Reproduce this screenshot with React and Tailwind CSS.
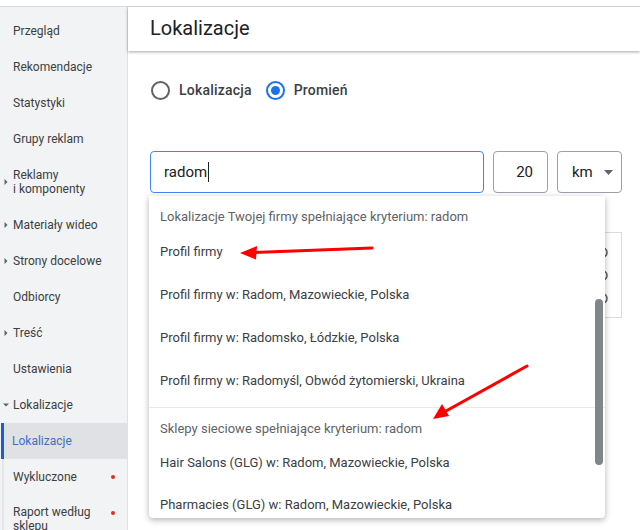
import React from "react"

const navItems = [
  { label: "Przegląd" },
  { label: "Rekomendacje" },
  { label: "Statystyki" },
  { label: "Grupy reklam" },
  { label: ["Reklamy", "i komponenty"], arrow: "right", tall: true },
  { label: "Materiały wideo", arrow: "right" },
  { label: "Strony docelowe", arrow: "right" },
  { label: "Odbiorcy" },
  { label: "Treść", arrow: "right" },
  { label: "Ustawienia" },
  { label: "Lokalizacje", arrow: "down" },
]

const subItems = [
  { label: "Lokalizacje", active: true },
  { label: "Wykluczone", dot: true },
  { label: ["Raport według", "sklepu"], dot: true, tall: true },
]

function Caret({ dir }) {
  if (dir === "down") {
    return (
      <svg width="6" height="6" viewBox="0 0 6 6" className="absolute left-[3px] top-1/2 -translate-y-1/2">
        <path d="M0 1.5 L6 1.5 L3 4.5 Z" fill="#5f6368" />
      </svg>
    )
  }
  return (
    <svg width="6" height="6" viewBox="0 0 6 6" className="absolute left-[3px] top-1/2 -translate-y-1/2">
      <path d="M1.5 0 L4.5 3 L1.5 6 Z" fill="#5f6368" />
    </svg>
  )
}

function Sidebar() {
  return (
    <div className="w-[128px] shrink-0 bg-[#f1f3f4] border-r border-[#e0e0e0] pt-[6px] text-[12px] text-[#3c4043]">
      {navItems.map((it, i) => (
        <div key={i} className={`relative flex items-center pl-[13px] ${it.tall ? "h-[50px]" : "h-[36px]"}`}>
          {it.arrow && <Caret dir={it.arrow} />}
          {Array.isArray(it.label) ? (
            <div className="leading-[14px]">
              <div>{it.label[0]}</div>
              <div>{it.label[1]}</div>
            </div>
          ) : (
            <span>{it.label}</span>
          )}
        </div>
      ))}
      <div className="ml-[2px] border-l-[2px] border-[#e3e5e8]">
        {subItems.map((it, i) => (
          <div
            key={i}
            className={`relative flex justify-between pr-[12px] ${it.tall ? "h-[40px] items-start pt-[10px]" : "h-[36px] items-center"} ${it.active ? "bg-[#dfe1e5] -ml-[3px] pl-[8px] border-l-[3px] border-[#1a5fd0] text-[#3f6fc6]" : "pl-[9px]"}`}
          >
            {Array.isArray(it.label) ? (
              <div className="leading-[14px]">
                <div>{it.label[0]}</div>
                <div>{it.label[1]}</div>
              </div>
            ) : (
              <span>{it.label}</span>
            )}
            {it.dot && <span className={`w-[4px] h-[4px] rounded-full bg-[#d93025] ${it.tall ? "mt-[6px]" : ""}`} />}
          </div>
        ))}
      </div>
    </div>
  )
}

function Radio({ checked, label }) {
  return (
    <div className="flex items-center gap-[9px]">
      {checked ? (
        <span className="w-[19px] h-[19px] rounded-full border-[2px] border-[#1a73e8] flex items-center justify-center">
          <span className="w-[9px] h-[9px] rounded-full bg-[#1a73e8]" />
        </span>
      ) : (
        <span className="w-[19px] h-[19px] rounded-full border-[2px] border-[#5f6368]" />
      )}
      <span className="text-[14px] font-medium text-[#3c4043] tracking-[0.2px]">{label}</span>
    </div>
  )
}

function Arrows() {
  return (
    <svg className="absolute inset-0 pointer-events-none" width="640" height="530" viewBox="0 0 640 530">
      <line x1="372" y1="248" x2="254" y2="252.5" stroke="#ff0000" strokeWidth="3" strokeLinecap="round" />
      <path d="M240 253 L257 246 L256 259.5 Z" fill="#ff0000" />
      <line x1="527" y1="366" x2="446" y2="411" stroke="#ff0000" strokeWidth="3" strokeLinecap="round" />
      <path d="M433 419 L442 404 L449 416 Z" fill="#ff0000" />
    </svg>
  )
}

function Dropdown() {
  const bizItems = [
    "Profil firmy",
    "Profil firmy w: Radom, Mazowieckie, Polska",
    "Profil firmy w: Radomsko, Łódzkie, Polska",
    "Profil firmy w: Radomyśl, Obwód żytomierski, Ukraina",
  ]
  const chainItems = [
    "Hair Salons (GLG) w: Radom, Mazowieckie, Polska",
    "Pharmacies (GLG) w: Radom, Mazowieckie, Polska",
  ]
  return (
    <div className="absolute left-[21px] top-[189px] w-[456px] h-[322px] bg-white rounded-b-[4px] shadow-[0_2px_6px_rgba(0,0,0,0.3)] overflow-hidden text-[13px]">
      <div className="h-[34px] pt-[7px] flex items-center pl-[11px] text-[#5f6368]">
        Lokalizacje Twojej firmy spełniające kryterium: radom
      </div>
      {bizItems.map((t) => (
        <div key={t} className="h-[43px] flex items-center pl-[11px] text-[#3c4043]">{t}</div>
      ))}
      <div className="mt-[5px] border-t border-[#e8eaed]" />
      <div className="h-[34px] pt-[7px] flex items-center pl-[11px] text-[#5f6368]">
        Sklepy sieciowe spełniające kryterium: radom
      </div>
      {chainItems.map((t) => (
        <div key={t} className="h-[42px] flex items-center pl-[11px] text-[#3c4043]">{t}</div>
      ))}
      <div className="absolute right-[2px] top-[103px] w-[8px] h-[166px] rounded-full bg-[#80868b]" />
    </div>
  )
}

export default function App() {
  return (
    <div className="relative w-[640px] h-[530px] overflow-hidden bg-white font-['Roboto',sans-serif]">
      <div className="h-[7px] border-b border-[#dadce0]" />
      <div className="flex h-[523px]">
        <Sidebar />
        <div className="relative flex-1 bg-white">
          <div className="h-[44px] flex items-center pl-[22px] shadow-[0_1px_3px_rgba(0,0,0,0.35)] relative z-10">
            <h1 className="text-[20px] text-[#202124] -mt-[2px]">Lokalizacje</h1>
          </div>
          <div className="flex items-center gap-[14px] pl-[23px] mt-[29px]">
            <Radio label="Lokalizacja" />
            <Radio checked label="Promień" />
          </div>

          <div className="flex gap-[9px] pl-[22px] mt-[50px] text-[15px] text-[#202124]">
            <div className="w-[334px] h-[42px] rounded-[4px] border border-[#4285f4] flex items-center pl-[13px]">
              radom
              <span className="w-px h-[20px] bg-[#202124] ml-px" />
            </div>
            <div className="w-[55px] h-[42px] rounded-[4px] border border-[#9aa0a6] flex items-center justify-end pr-[14px]">
              20
            </div>
            <div className="w-[65px] h-[42px] rounded-[4px] border border-[#9aa0a6] flex items-center pl-[14px] gap-[11px]">
              km
              <svg width="9" height="5" viewBox="0 0 9 5">
                <path d="M0 0 L9 0 L4.5 5 Z" fill="#5f6368" />
              </svg>
            </div>
          </div>

          <div className="absolute left-[456px] top-[225px] w-[38px] h-[86px] border border-[#dadce0] flex flex-col items-end pr-[13px] pt-[12px] gap-[8px]">
            {[0, 1, 2].map((i) => (
              <svg key={i} width="12" height="15" viewBox="0 0 12 15">
                <circle cx="6" cy="7.5" r="5" fill="none" stroke="#5f6368" strokeWidth="1.6" />
                <path d="M3.5 7.5 L8.5 7.5" stroke="#5f6368" strokeWidth="1.4" />
              </svg>
            ))}
          </div>

          <Dropdown />
        </div>
      </div>
      <Arrows />
    </div>
  )
}
